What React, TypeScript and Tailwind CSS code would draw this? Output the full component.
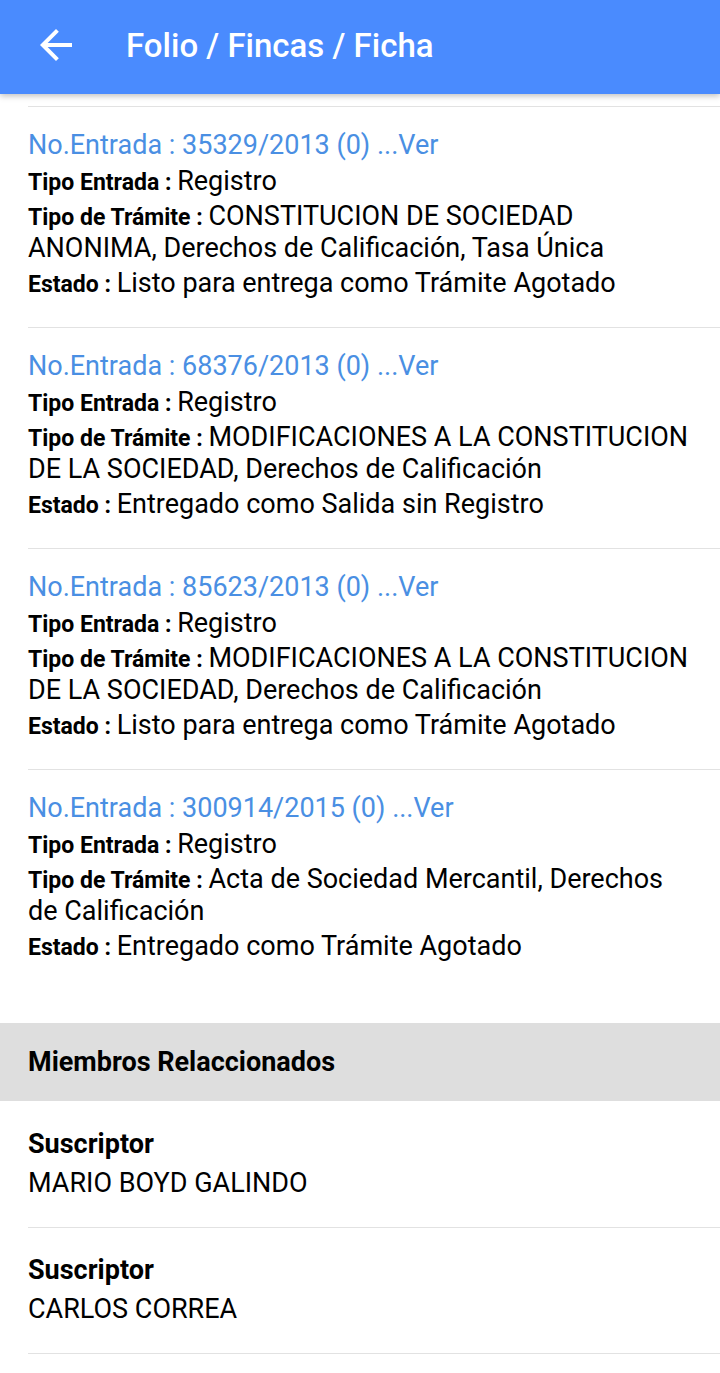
const entradas = [
  {
    no: '35329/2013',
    tipoEntrada: 'Registro',
    tramite: 'CONSTITUCION DE SOCIEDAD ANONIMA, Derechos de Calificación, Tasa Única',
    estado: 'Listo para entrega como Trámite Agotado',
  },
  {
    no: '68376/2013',
    tipoEntrada: 'Registro',
    tramite: 'MODIFICACIONES A LA CONSTITUCION DE LA SOCIEDAD, Derechos de Calificación',
    estado: 'Entregado como Salida sin Registro',
  },
  {
    no: '85623/2013',
    tipoEntrada: 'Registro',
    tramite: 'MODIFICACIONES A LA CONSTITUCION DE LA SOCIEDAD, Derechos de Calificación',
    estado: 'Listo para entrega como Trámite Agotado',
  },
  {
    no: '300914/2015',
    tipoEntrada: 'Registro',
    tramite: 'Acta de Sociedad Mercantil, Derechos de Calificación',
    estado: 'Entregado como Trámite Agotado',
  },
]

const miembros = [
  { rol: 'Suscriptor', nombre: 'MARIO BOYD GALINDO' },
  { rol: 'Suscriptor', nombre: 'CARLOS CORREA' },
]

function Field({ label, value }: { label: string; value: string }) {
  return (
    <p className="mt-[3px] pr-7 text-[27px] leading-[32px] text-black">
      <span className="text-[23px] font-bold leading-none">{label} : </span>
      {value}
    </p>
  )
}

export default function App() {
  return (
    <div className="min-h-[1373px] w-[720px] bg-white font-['Roboto',sans-serif] text-black">
      <header className="relative z-10 flex h-[94px] items-center bg-[#4a8bfe] pb-1 shadow-[0_2px_6px_rgba(0,0,0,0.25)]">
        <button className="ml-8 flex h-12 w-12 items-center justify-center text-white">
          <svg width="48" height="48" viewBox="0 0 24 24" fill="currentColor">
            <path d="M20 11H7.83l5.59-5.59L12 4l-8 8 8 8 1.41-1.41L7.83 13H20v-2z" />
          </svg>
        </button>
        <h1 className="ml-[46px] text-[33px] font-medium leading-none text-white">Folio / Fincas / Ficha</h1>
      </header>

      <main className="pt-[12px]">
        <section className="ml-7">
          {entradas.map((e, i) => (
            <div
              key={e.no}
              className={
                i === entradas.length - 1
                  ? 'border-t border-[#e2e2e2] pb-[61px] pt-[21px]'
                  : 'border-t border-[#e2e2e2] pb-[28px] pt-[21px]'
              }
            >
              <p className="text-[27px] leading-[34px] text-[#4a8fe3]">
                No.Entrada : {e.no} (0) ...Ver
              </p>
              <Field label="Tipo Entrada" value={e.tipoEntrada} />
              <Field label="Tipo de Trámite" value={e.tramite} />
              <Field label="Estado" value={e.estado} />
            </div>
          ))}
        </section>

        <div className="flex h-[78px] items-center bg-[#dedede] px-7">
          <h2 className="text-[27px] font-bold leading-none">Miembros Relaccionados</h2>
        </div>

        <section className="ml-7">
          {miembros.map((m, i) => (
            <div
              key={m.nombre}
              className={
                i === 0
                  ? 'border-b border-[#e2e2e2] pb-[28px] pt-[27px]'
                  : 'border-b border-[#e2e2e2] pb-[28px] pt-[26px]'
              }
            >
              <p className="text-[27px] font-bold leading-[32px]">{m.rol}</p>
              <p className="mt-[7px] text-[27px] leading-[32px]">{m.nombre}</p>
            </div>
          ))}
        </section>
      </main>
    </div>
  )
}
